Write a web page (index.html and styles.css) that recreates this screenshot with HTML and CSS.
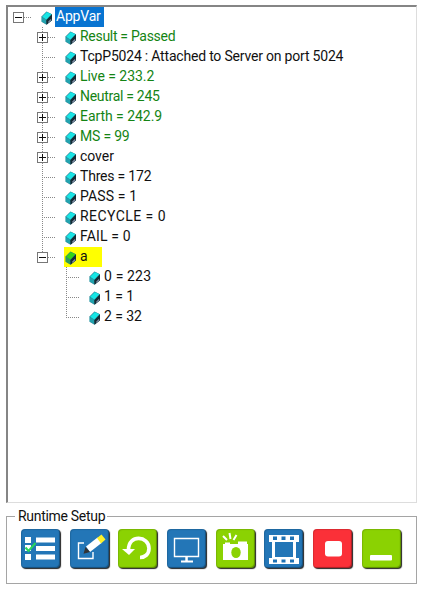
FILE: index.html
```
<!DOCTYPE html>
<html lang="en">
<head>
<meta charset="utf-8">
<title>AppVar</title>
<link rel="stylesheet" href="styles.css">
</head>
<body>
<svg class="defs" aria-hidden="true">
  <symbol id="cube" viewBox="0 0 12 14">
    <path d="M.5 5.500 5.500 .5l5.500 2.800v6L5.500 13.800 .5 10.800z" fill="#28778a"/>
    <path d="M1 5.700 5.800 1l4.800 2.300-5 5.500z" fill="currentColor"/>
    <path d="M.5 6l4.700 2.800v4.500L.5 10.500z" fill="currentColor" fill-opacity=".4"/>
    <path d="M5.300 9 11 3.300v6L5.500 13.800z" fill="#142c35"/>
    <path d="M7.300 10.600 10.200 7.800v1.500l-2.900 2.600z" fill="#8f96b0"/>
  </symbol>
</svg>
<main class="tree">
  <div class="node"><span class="stem"><i class="box"></i></span><svg class="cube"><use href="#cube"/></svg><span class="label selected">AppVar</span></div>
  <ul class="branch">
    <li class="node"><span class="stem"><i class="box plus"></i></span><svg class="cube"><use href="#cube"/></svg><span class="label green tight">Result = Passed</span></li>
    <li class="node"><span class="stem"></span><svg class="cube"><use href="#cube"/></svg><span class="label">TcpP5024 : Attached to Server on port 5024</span></li>
    <li class="node"><span class="stem"><i class="box plus"></i></span><svg class="cube"><use href="#cube"/></svg><span class="label green even">Live = 233.2</span></li>
    <li class="node"><span class="stem"><i class="box plus"></i></span><svg class="cube"><use href="#cube"/></svg><span class="label green tight">Neutral = 245</span></li>
    <li class="node"><span class="stem"><i class="box plus"></i></span><svg class="cube"><use href="#cube"/></svg><span class="label green even">Earth = 242.9</span></li>
    <li class="node"><span class="stem"><i class="box plus"></i></span><svg class="cube"><use href="#cube"/></svg><span class="label green">MS = 99</span></li>
    <li class="node"><span class="stem"><i class="box plus"></i></span><svg class="cube"><use href="#cube"/></svg><span class="label even">cover</span></li>
    <li class="node"><span class="stem"></span><svg class="cube"><use href="#cube"/></svg><span class="label">Thres = 172</span></li>
    <li class="node"><span class="stem"></span><svg class="cube"><use href="#cube"/></svg><span class="label loose">PASS = 1</span></li>
    <li class="node"><span class="stem"></span><svg class="cube"><use href="#cube"/></svg><span class="label wide">RECYCLE = 0</span></li>
    <li class="node"><span class="stem"></span><svg class="cube"><use href="#cube"/></svg><span class="label loose">FAIL = 0</span></li>
    <li class="node"><span class="stem"><i class="box"></i></span><span class="marked"><svg class="cube active"><use href="#cube"/></svg><span class="label">a</span></span></li>
  </ul>
  <ul class="branch inner">
    <li class="node"><span class="stem"></span><svg class="cube"><use href="#cube"/></svg><span class="label loose">0 = 223</span></li>
    <li class="node"><span class="stem"></span><svg class="cube"><use href="#cube"/></svg><span class="label even">1 = 1</span></li>
    <li class="node"><span class="stem"></span><svg class="cube"><use href="#cube"/></svg><span class="label even">2 = 32</span></li>
  </ul>
</main>
<fieldset class="setup">
  <legend>Runtime Setup</legend>
  <div class="tools">
    <button class="tool blue" aria-label="Checklist"><svg viewBox="0 0 39 39"><path fill="#fff" d="M4 8h6v6H4zM4 16h6v6H4zM4 25h6v6H4zM15 8.500h19v5H15zM15 17h19v5H15zM15 25.500h19v5H15z"/><path d="M4.500 18.500l3 3.500 7-8" fill="none" stroke="#27d65b" stroke-width="2"/></svg></button>
    <button class="tool blue" aria-label="Edit"><svg viewBox="0 0 39 39"><path d="M14 14H8.500v15.500H23V23" fill="none" stroke="#fff" stroke-width="1.400"/><path d="M16 17.500l11.500-9 4 5.500-11.500 9z" fill="#fff"/><path d="M27 9l4.500-3.500 4 5L31 14.500z" fill="#fff22a"/><path d="M15.500 18l4.500 5-6.500 1.800z" fill="#333"/></svg></button>
    <button class="tool green-bg" aria-label="Undo"><svg viewBox="0 0 39 39"><path d="M10.500 21C10.500 4.500 31 7 31 19.500c0 6-4.500 9-9 9" fill="none" stroke="#fff" stroke-width="3.700"/><path d="M4 20h13l-6 6z" fill="#fff"/></svg></button>
    <button class="tool blue" aria-label="Display"><svg viewBox="0 0 39 39"><path d="M7.500 9.500h24v18h-24z" fill="none" stroke="#fff" stroke-width="1.400"/><path d="M18.300 27h2.500v5h-2.500zM14 31.500h12v2H14z" fill="#fff"/></svg></button>
    <button class="tool green-bg" aria-label="Snapshot"><svg viewBox="0 0 39 39"><path d="M7 15h2v-1.500h5V15h8v-2.500h9V15h1v16H7z" fill="#fff"/><ellipse cx="20" cy="23.500" rx="4.700" ry="5.500" fill="#8bd202"/><path d="M7 7l4 4M13.500 4l1 6M20.500 6l-3 5" stroke="#fff" stroke-width="2"/></svg></button>
    <button class="tool blue" aria-label="Film"><svg viewBox="0 0 39 39"><path fill="#fff" fill-rule="evenodd" d="M5 6h30v7h-3v16h3v6H5v-6h3V13H5zM11 13v15h18V13z"/><path fill="#1f72b4" d="M9 7.500h4v3.500H9zM17.500 7.500h4v3.500h-4zM26 7.500h4v3.500h-4zM9 30.500h4v3H9zM17.500 30.500h4v3h-4zM26 30.500h4v3h-4z"/></svg></button>
    <button class="tool red" aria-label="Stop"><svg viewBox="0 0 39 39"><rect x="12" y="12" width="17" height="15.500" rx="3" fill="#fff"/></svg></button>
    <button class="tool green-bg" aria-label="Minimize"><svg viewBox="0 0 39 39"><rect x="8" y="26" width="22" height="5.500" rx="1" fill="#fff"/></svg></button>
  </div>
</fieldset>
</body>
</html>
```
FILE: styles.css
```
* { box-sizing: border-box; }
body {
  margin: 0;
  padding: 5px 6px 0;
  background: #fff;
  color: #111;
  font: 14px/20px Roboto, "Liberation Sans", sans-serif;
  letter-spacing: -0.2px;
}
.defs { position: absolute; width: 0; height: 0; }
.tree {
  width: 411px;
  height: 498px;
  padding-left: 4px;
  border: solid #ddd;
  border-width: 2px 1px 1px 2px;
  border-top-color: #858585;
  border-left-color: #858585;
}
.node { display: flex; align-items: center; height: 20px; }
.branch {
  margin: 0;
  padding: 0 0 0 24px;
  list-style: none;
  background: repeating-linear-gradient(#888 0 1px, transparent 1px 2px) 30px 0 / 1px calc(100% - 10px) no-repeat;
}
.branch.inner {
  padding-left: 48px;
  background-position: 54px 0;
}
.stem {
  display: flex;
  align-items: center;
  width: 20px;
  height: 20px;
  margin-right: 9px;
  background: repeating-linear-gradient(90deg, #888 0 1px, transparent 1px 2px) 6px 10px / 14px 1px no-repeat;
}
.box {
  width: 11px;
  height: 11px;
  margin: 1px 0 0 1px;
  border: 1px solid #777;
  background: linear-gradient(#111, #111) center / 7px 1px no-repeat #fff;
}
.box.plus {
  background: linear-gradient(#111, #111) center / 7px 1px no-repeat, linear-gradient(#111, #111) center / 1px 7px no-repeat #fff;
}
.cube { width: 12px; height: 14px; margin-top: 2px; flex: none; color: #18e4e4; }
.cube.active { color: #32d516; }
.label { height: 20px; margin-left: 3px; line-height: 19px; white-space: nowrap; }
.label.selected {
  width: 49px;
  margin-left: 2px;
  padding-left: 1px;
  background: #0874d1;
  color: #fff;
}
.green { color: #148414; }
.tight { letter-spacing: -0.3px; }
.even { letter-spacing: -0.05px; }
.loose { letter-spacing: 0.15px; }
.wide { letter-spacing: 0.45px; }
.marked {
  display: flex;
  align-items: center;
  width: 38px;
  height: 20px;
  margin-left: -1px;
  padding-left: 1px;
  background: #ff0;
}
.setup {
  width: 411px;
  height: 78px;
  margin: 3px 0 0;
  padding: 3px 0 0 14px;
  border: 1px solid #a5a5a5;
  min-width: 0;
}
.setup legend { margin-left: -6px; padding: 0 2px 0 3px; letter-spacing: -0.3px; }
.tools { display: flex; gap: 9.7px; }
.tool {
  flex: none;
  width: 39px;
  height: 39px;
  padding: 0;
  border: 0;
  border-radius: 4px;
  box-shadow: 1px 1px 1px #222, inset -1px -1px 1px #0005, inset 1px 1px 1px #0002;
}
.tool svg { display: block; width: 39px; height: 39px; }
.blue { background: #2376b7; }
.green-bg { background: #8bd202; }
.red { background: #fb3038; }
```
